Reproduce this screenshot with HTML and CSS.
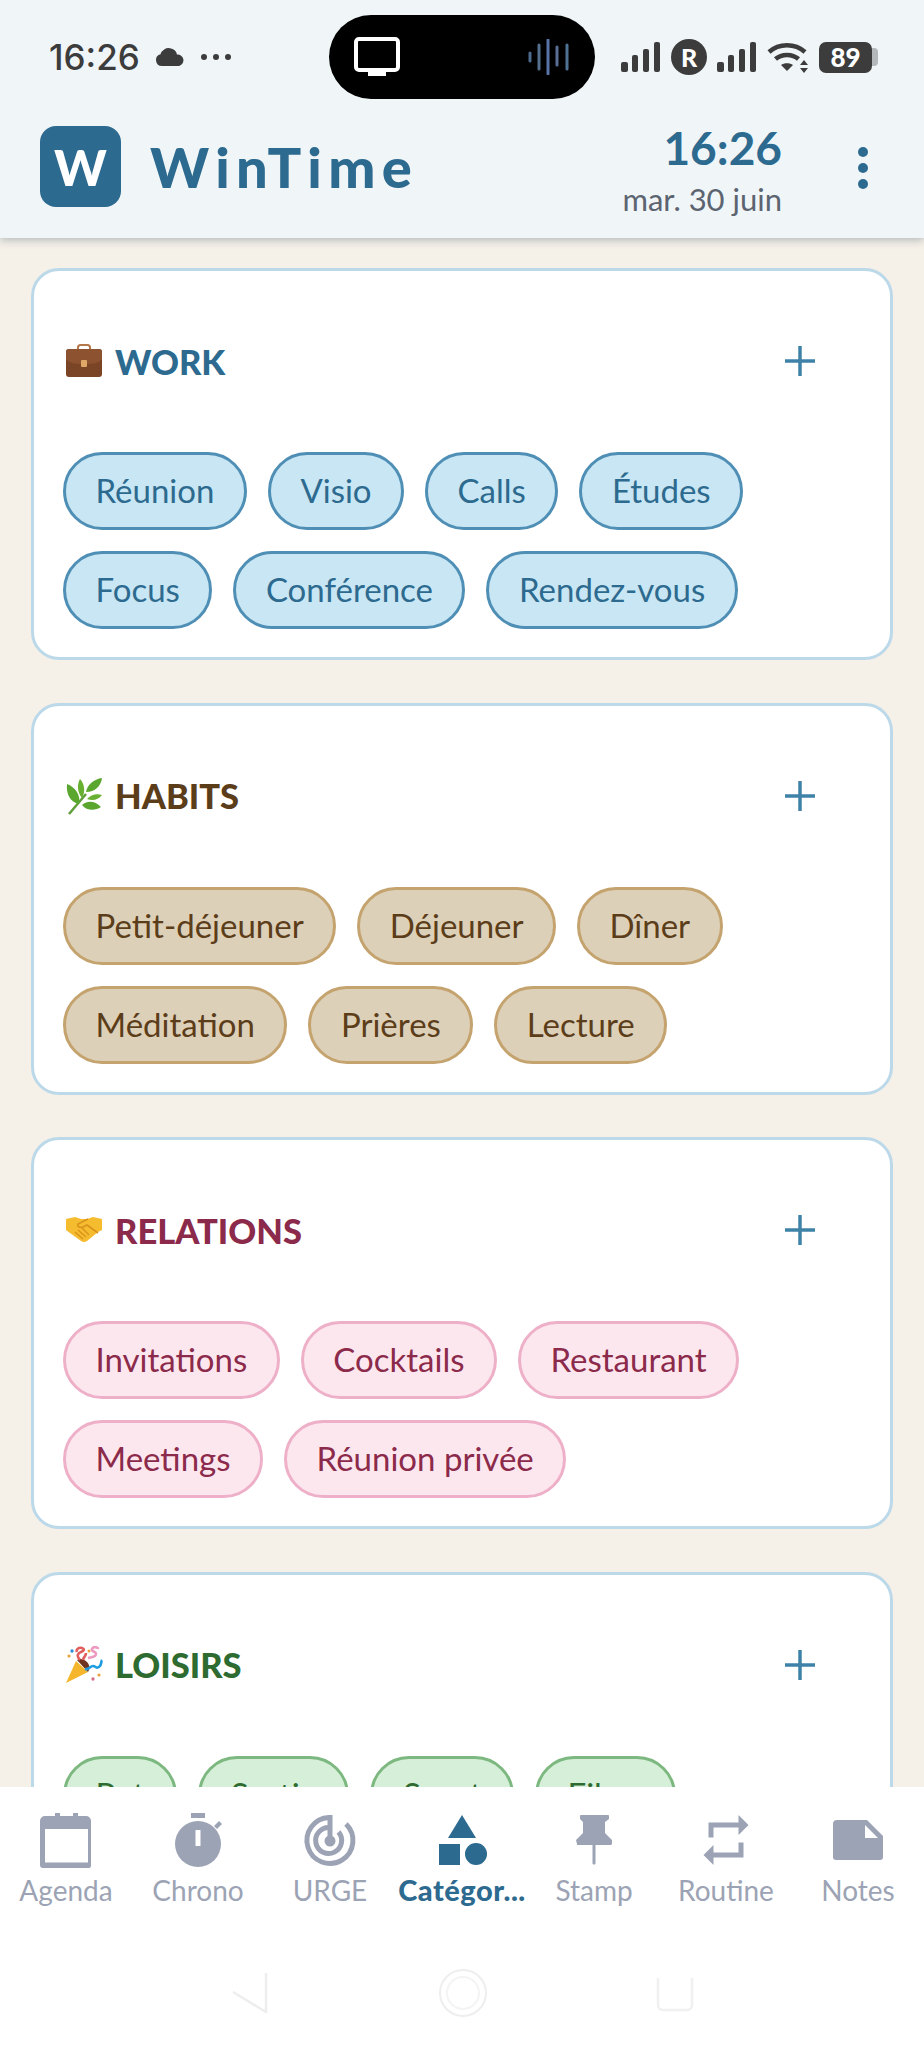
FILE: index.html

```html
<!DOCTYPE html>
<html lang="fr">

<head>
    <meta charset="UTF-8">
    <meta name="viewport" content="width=device-width, initial-scale=1.0">
    <title>WinTime</title>
    <link rel="stylesheet" href="styles.css">
</head>

<body>
    <!-- Header Section -->
    <header class="top">
        <div class="status-bar">
            <div class="status-left">
                <span class="status-time">16:26</span>
                <svg class="status-cloud" width="30" height="18" viewBox="0 0 30 18"><path d="M7 18a6 6 0 0 1-1.5-11.8A8.6 8.6 0 0 1 15 .2a8 8 0 0 1 7 6.400A5.800 5.800 0 0 1 24 18z" fill="#3c3c3c"/></svg>
                <span class="status-dots"><i></i><i></i><i></i></span>
            </div>
            <div class="island">
                <svg width="46" height="40" viewBox="0 0 46 40"><path d="M5 2h36a3 3 0 0 1 3 3v25a3 3 0 0 1-3 3H5a3 3 0 0 1-3-3V5a3 3 0 0 1 3-3z" fill="none" stroke="#fff" stroke-width="4"/><rect x="14" y="33" width="18" height="6" fill="#fff"/></svg>
                <svg width="42" height="36" viewBox="0 0 42 36"><g fill="none" stroke-width="3" stroke-linecap="round"><path d="M2 14v8" stroke="#4d6b8c"/><path d="M11 6v24" stroke="#55708f"/><path d="M20 1v34" stroke="#5a74a8"/><path d="M29 8v18" stroke="#5a6f96"/><path d="M39 6v24" stroke="#4f7396"/></g></svg>
            </div>
            <div class="status-right">
                <svg width="40" height="30" viewBox="0 0 40 30"><g fill="#3c3c3c"><rect x="0" y="20" width="7" height="10" rx="2"/><rect x="11" y="13" width="6" height="17" rx="2"/><rect x="22" y="7" width="6" height="23" rx="2"/><rect x="33" y="0" width="6" height="30" rx="2"/></g></svg>
                <span class="sim-badge">R</span>
                <svg width="40" height="30" viewBox="0 0 40 30"><g fill="#3c3c3c"><rect x="0" y="20" width="7" height="10" rx="2"/><rect x="11" y="13" width="6" height="17" rx="2"/><rect x="22" y="7" width="6" height="23" rx="2"/><rect x="33" y="0" width="6" height="30" rx="2"/></g></svg>
                <svg width="42" height="32" viewBox="0 0 42 32"><g fill="none" stroke="#3c3c3c" stroke-width="4.500"><path d="M2 11c10-9 26-9 36 0"/><path d="M8.500 18c6-5.500 17-5.500 23 0"/></g><path d="M14 24c3-2.500 9-2.500 12 0l-6 6z" fill="#3c3c3c"/><path d="M37 19l4 5h-8zM37 32l4-5h-8z" fill="#3c3c3c"/></svg>
                <div class="battery"><span class="battery-level">89</span><i class="battery-tip"></i></div>
            </div>
        </div>
        <div class="app-bar">
            <div class="logo">W</div>
            <h1 class="brand">WinTime</h1>
            <div class="clock">
                <div class="clock-time">16:26</div>
                <div class="clock-date">mar. 30 juin</div>
            </div>
            <div class="kebab"><i></i><i></i><i></i></div>
        </div>
    </header>

    <main class="content">
        <!-- Work -->
        <section class="card work">
            <div class="card-head">
                <svg class="emoji" width="38" height="34" viewBox="0 0 38 34"><path d="M13 6V3.500C13 2 14 1 15.500 1h7C24 1 25 2 25 3.500V6" fill="none" stroke="#b5784a" stroke-width="2"/><rect x="1" y="5" width="36" height="28" rx="3" fill="#7a4526"/><path d="M1 8a3 3 0 0 1 3-3h30a3 3 0 0 1 3 3v7c-3 4-8 5-18 5S4 19 1 15z" fill="#8d5230"/><rect x="16" y="16" width="6" height="7" rx="1" fill="#e0a868"/></svg>
                <h2 class="card-title">WORK</h2>
                <div class="add-btn"><svg width="32" height="32" viewBox="0 0 32 32"><path d="M16 1v30M1 16h30" stroke="currentColor" stroke-width="3.500" fill="none"/></svg></div>
            </div>
            <div class="chips">
                <span class="chip">Réunion</span>
                <span class="chip">Visio</span>
                <span class="chip">Calls</span>
                <span class="chip">Études</span>
                <span class="chip">Focus</span>
                <span class="chip">Conférence</span>
                <span class="chip">Rendez-vous</span>
            </div>
        </section>

        <!-- Habits -->
        <section class="card habits">
            <div class="card-head">
                <svg class="emoji" width="38" height="38" viewBox="0 0 38 38"><path d="M4 37L21 17" stroke="#5f9e3a" stroke-width="2.500" fill="none"/><path d="M14 27C5 25 1 17 2 7c8 3 14 11 12 20z" fill="#5aa62f"/><path d="M17 21C12 15 12 7 15 2c4 4 6 12 2 19z" fill="#68b032"/><path d="M21 15C22 8 29 2 37 1c-1 8-7 14-16 14z" fill="#5aa62f"/><path d="M22 22c4-4 9-6 15-4-4 5-9 6-15 4z" fill="#68b032"/><path d="M17 28c6-5 13-4 19 2-6 4-14 4-19-2z" fill="#5aa62f"/></svg>
                <h2 class="card-title">HABITS</h2>
                <div class="add-btn"><svg width="32" height="32" viewBox="0 0 32 32"><path d="M16 1v30M1 16h30" stroke="currentColor" stroke-width="3.500" fill="none"/></svg></div>
            </div>
            <div class="chips">
                <span class="chip">Petit-déjeuner</span>
                <span class="chip">Déjeuner</span>
                <span class="chip">Dîner</span>
                <span class="chip">Méditation</span>
                <span class="chip">Prières</span>
                <span class="chip">Lecture</span>
            </div>
        </section>

        <!-- Relations -->
        <section class="card relations">
            <div class="card-head">
                <svg class="emoji" width="38" height="28" viewBox="0 0 38 28"><path d="M1 3l9-2 6 2h6l6-2 9 2v11l-4 2-11 9q-3 2-6 0L5 17l-4-3z" fill="#f6bc30"/><path d="M23 3l-10 5c-1 3 2 4 5 3l4-2 11 8" fill="none" stroke="#d9921a" stroke-width="1.600"/><path d="M10 16l8 7M13 14l8 7M17 12l7 7" stroke="#d9921a" stroke-width="1.400" fill="none"/></svg>
                <h2 class="card-title">RELATIONS</h2>
                <div class="add-btn"><svg width="32" height="32" viewBox="0 0 32 32"><path d="M16 1v30M1 16h30" stroke="currentColor" stroke-width="3.500" fill="none"/></svg></div>
            </div>
            <div class="chips">
                <span class="chip">Invitations</span>
                <span class="chip">Cocktails</span>
                <span class="chip">Restaurant</span>
                <span class="chip">Meetings</span>
                <span class="chip">Réunion privée</span>
            </div>
        </section>

        <!-- Loisirs -->
        <section class="card loisirs">
            <div class="card-head">
                <svg class="emoji" width="38" height="38" viewBox="0 0 38 38"><path d="M1 37L11 15l12 11z" fill="#f6b62c"/><path d="M12 14l11 12c2-3 2-7-1-10s-7-4-10-2z" fill="#6e3420"/><path d="M15 14c-4-4-2-7 1-8 3-1 4-3 1-4-4-1-6 2-5 4M18 14c1-4 3-4 3-7" fill="none" stroke-width="2.600" stroke="#e25d5d"/><path d="M23 12c4-1 8-1 8-4s-5-2-4-5 6-2 6 0" fill="none" stroke="#ee9ac0" stroke-width="2.600"/><path d="M20 23c4 1 5-3 8-3s3 3 6 1 2-6 3-7" fill="none" stroke="#1f9de0" stroke-width="2.600"/><g fill="#e8a33a"><circle cx="4" cy="10" r="1.600"/><circle cx="34" cy="29" r="1.600"/><circle cx="24" cy="5" r="1.500"/></g><circle cx="7" cy="5" r="1.700" fill="#2b8fd8"/><circle cx="28" cy="33" r="1.700" fill="#d9708a"/></svg>
                <h2 class="card-title">LOISIRS</h2>
                <div class="add-btn"><svg width="32" height="32" viewBox="0 0 32 32"><path d="M16 1v30M1 16h30" stroke="currentColor" stroke-width="3.500" fill="none"/></svg></div>
            </div>
            <div class="chips">
                <span class="chip">Pot</span>
                <span class="chip">Sortie</span>
                <span class="chip">Sport</span>
                <span class="chip">Films</span>
            </div>
        </section>
    </main>

    <!-- Bottom Navigation -->
    <nav class="bottom-nav">
        <div class="nav-item">
            <svg width="60" height="60" viewBox="0 0 60 60"><path d="M10 6h9V3h5v3h13V3h5v3h8a5 5 0 0 1 5 5v45a2 2 0 0 1-2 2H7a3 3 0 0 1-3-3V11a5 5 0 0 1 5-5zm-1 13v33.500h43V19z" fill="currentColor" fill-rule="evenodd"/></svg>
            <span class="nav-label">Agenda</span>
        </div>
        <div class="nav-item">
            <svg width="60" height="60" viewBox="0 0 60 60"><rect x="23" y="3" width="14" height="5" fill="currentColor"/><circle cx="30" cy="34" r="23" fill="currentColor"/><path d="M46 16l5-5 3 3-5 5z" fill="currentColor"/><rect x="27.500" y="20" width="5" height="16" fill="#fff"/></svg>
            <span class="nav-label">Chrono</span>
        </div>
        <div class="nav-item">
            <svg width="60" height="60" viewBox="0 0 60 60"><g fill="none" stroke="currentColor" stroke-width="5"><path d="M29 7.500A23 23 0 1 0 46 14"/><path d="M29 17.500A13 13 0 1 0 38.500 22"/></g><circle cx="30" cy="31" r="5.500" fill="currentColor"/><rect x="27.500" y="5" width="5" height="24" fill="currentColor"/></svg>
            <span class="nav-label">URGE</span>
        </div>
        <div class="nav-item active">
            <svg width="60" height="60" viewBox="0 0 60 60"><path d="M30 5l14 23H16z" fill="currentColor"/><rect x="7" y="34" width="21" height="21" fill="currentColor"/><circle cx="44" cy="44" r="11" fill="currentColor"/></svg>
            <span class="nav-label">Catégor...</span>
        </div>
        <div class="nav-item">
            <svg width="60" height="60" viewBox="0 0 60 60"><path d="M16 6a1 1 0 0 1 1-1h27a1 1 0 0 1 1 1v3l-4 3v11l7 7v4l-1 1H31.500v18c0 2-3 2-3 0V35H13v-1l-1-4 7-7V12l-3-3z" fill="currentColor"/></svg>
            <span class="nav-label">Stamp</span>
        </div>
        <div class="nav-item">
            <svg width="60" height="60" viewBox="0 0 24 24"><path d="M7 7h10v3l4-4-4-4v3H5v6h2V7zm10 10H7v-3l-4 4 4 4v-3h12v-6h-2v4z" fill="currentColor"/></svg>
            <span class="nav-label">Routine</span>
        </div>
        <div class="nav-item">
            <svg width="60" height="60" viewBox="0 0 60 60"><path d="M9 10h30l16 16v21a3 3 0 0 1-3 3H8a3 3 0 0 1-3-3V14a4 4 0 0 1 4-4z" fill="currentColor"/><path d="M37 15l13 13H37z" fill="#fff"/></svg>
            <span class="nav-label">Notes</span>
        </div>
    </nav>

    <!-- Gesture Bar -->
    <div class="gesture-bar">
        <svg width="40" height="46" viewBox="0 0 40 46"><path d="M3 22l33 20V3" fill="none" stroke="#eeeeee" stroke-width="2.500" stroke-linejoin="round"/></svg>
        <svg width="50" height="50" viewBox="0 0 50 50"><circle cx="25" cy="25" r="23" fill="none" stroke="#eeeeee" stroke-width="2"/><circle cx="25" cy="25" r="16" fill="none" stroke="#f4f4f4" stroke-width="2"/></svg>
        <svg width="38" height="38" viewBox="0 0 38 38"><path d="M2 4v27a5 5 0 0 0 5 5h24a5 5 0 0 0 5-5V4" fill="none" stroke="#f0f0f0" stroke-width="2.500"/></svg>
    </div>
</body>

</html>
```

FILE: styles.css

```css
* {
    margin: 0;
    padding: 0;
    box-sizing: border-box;
}

body {
    width: 924px;
    height: 2048px;
    overflow: hidden;
    display: flex;
    flex-direction: column;
    font-family: 'Lato', 'Noto Sans', sans-serif;
    background-color: #f5f0e8;
}

.top {
    background-color: #f0f5f8;
    height: 238px;
    box-shadow: 0 2px 8px rgba(50, 80, 100, 0.35);
    position: relative;
    z-index: 5;
}

.status-bar {
    height: 114px;
    display: flex;
    align-items: center;
    padding: 0 46px 0 49px;
}

.status-left {
    flex: 0 0 280px;
    display: flex;
    align-items: center;
}

.status-time {
    font-family: 'Inter', sans-serif;
    font-size: 35px;
    font-weight: 500;
    color: #3c3c3c;
    width: 106px;
}

.status-dots {
    display: flex;
    gap: 6px;
    margin-left: 16px;
}

.status-dots i {
    width: 6px;
    height: 6px;
    border-radius: 50%;
    background-color: #3c3c3c;
}

.island {
    width: 266px;
    height: 84px;
    background-color: #000;
    border-radius: 42px;
    display: flex;
    align-items: center;
    justify-content: space-between;
    padding: 0 25px;
}

.status-right {
    margin-left: auto;
    display: flex;
    align-items: center;
    gap: 10px;
}

.sim-badge {
    width: 36px;
    height: 36px;
    border-radius: 50%;
    background-color: #3c3c3c;
    color: #fff;
    font-size: 25px;
    font-weight: 900;
    display: flex;
    align-items: center;
    justify-content: center;
}

.battery {
    display: flex;
    align-items: center;
}

.battery-level {
    width: 53px;
    height: 31px;
    background-color: #3c3c3c;
    border-radius: 7px;
    color: #fff;
    font-size: 26px;
    font-weight: 900;
    display: flex;
    align-items: center;
    justify-content: center;
}

.battery-tip {
    width: 6px;
    height: 18px;
    background-color: #b5b8ba;
    border-radius: 0 4px 4px 0;
}

.app-bar {
    display: flex;
    align-items: flex-start;
    padding: 0 56px 0 40px;
}

.logo {
    width: 81px;
    height: 81px;
    margin-top: 12px;
    border-radius: 16px;
    background-color: #2d6a8f;
    color: #fff;
    font-size: 50px;
    font-weight: 900;
    display: flex;
    align-items: center;
    justify-content: center;
}

.brand {
    margin: 12px 0 0 29px;
    font-size: 56px;
    line-height: 81px;
    font-weight: 900;
    letter-spacing: 6.3px;
    color: #2d6a8f;
}

.clock {
    margin: 8px 0 0 auto;
    text-align: right;
}

.clock-time {
    font-size: 46px;
    font-weight: 700;
    color: #2d6a8f;
    line-height: 52px;
}

.clock-date {
    font-size: 31px;
    color: #5b6470;
    line-height: 50px;
}

.kebab {
    margin: 33px 0 0 76px;
    display: flex;
    flex-direction: column;
    gap: 6px;
}

.kebab i {
    width: 10px;
    height: 10px;
    border-radius: 50%;
    background-color: #2d6a8f;
}

.content {
    flex: 1;
    min-height: 0;
    overflow: hidden;
    padding: 30px 31px 0;
    display: flex;
    flex-direction: column;
    gap: 42.5px;
}

.card {
    flex: none;
    background-color: #fff;
    border: 3px solid #bcd9ea;
    border-radius: 28px;
    padding: 29px 29px 28px;
}

.card-head {
    height: 122px;
    display: flex;
    align-items: center;
    margin-bottom: 30px;
}

.emoji {
    flex: none;
    margin: 0 12px 0 2px;
}

.card-title {
    font-size: 34.5px;
    font-weight: 900;
}

.add-btn {
    margin-left: auto;
    width: 122px;
    height: 122px;
    display: flex;
    align-items: center;
    justify-content: center;
    color: #3f82a8;
}

.chips {
    display: flex;
    flex-wrap: wrap;
    gap: 21px;
}

.chip {
    height: 78px;
    padding: 0 29.5px 2px;
    border: 3px solid;
    border-radius: 39px;
    font-size: 33px;
    display: flex;
    align-items: center;
}

.work .card-title,
.work .chip {
    color: #2d6a8f;
}

.work .chip {
    background-color: #c8e6f3;
    border-color: #4f8fb5;
}

.habits .card-title,
.habits .chip {
    color: #5c3d1a;
}

.habits .chip {
    background-color: #ddd0b8;
    border-color: #c4a36e;
}

.relations .card-title,
.relations .chip {
    color: #8b2a4a;
}

.relations .chip {
    background-color: #fde7ef;
    border-color: #eeb0c8;
}

.loisirs .card-title,
.loisirs .chip {
    color: #2e6b30;
}

.loisirs .chip {
    background-color: #d6efd8;
    border-color: #7cb87f;
}

.bottom-nav {
    height: 261px;
    background-color: #fff;
    position: relative;
    z-index: 2;
    display: grid;
    grid-template-columns: repeat(7, 1fr);
    padding-top: 23px;
}

.nav-item {
    display: flex;
    flex-direction: column;
    align-items: center;
    color: #9ca3b4;
}

.nav-item.active {
    color: #2d6a8f;
}

.nav-label {
    font-size: 28px;
    line-height: 40px;
}

.nav-item.active .nav-label {
    font-size: 29px;
    font-weight: 900;
    letter-spacing: 0.5px;
}

.gesture-bar {
    position: absolute;
    left: 0;
    top: 1968px;
    width: 924px;
    height: 50px;
    z-index: 3;
    display: flex;
    align-items: center;
    padding-left: 230px;
    gap: 168px;
}
```
